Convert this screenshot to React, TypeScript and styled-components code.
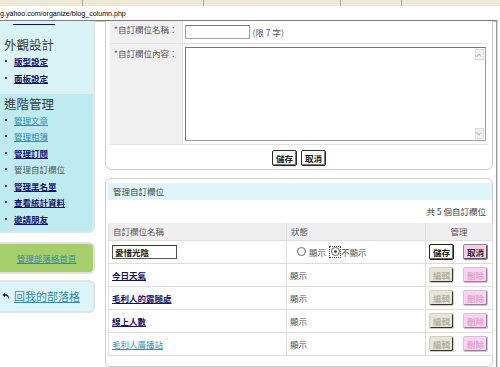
import React from "react";
import styled, { createGlobalStyle } from "styled-components";

const GlobalStyle = createGlobalStyle`
  html, body { margin: 0; padding: 0; background: #fff; }
  body {
    font-family: "Noto Sans CJK TC", "Noto Sans", sans-serif;
    font-size: 8.5px;
    color: #444;
    overflow: hidden;
  }
`;

const Window = styled.div`
  width: 500px;
  height: 367px;
  overflow: hidden;
  display: flex;
  flex-direction: column;
`;

const Chrome = styled.div`
  height: 6px;
  flex: none;
  background: #ece9d8;
  border-bottom: 1px solid #fff;
  display: flex;
`;

const ChromeCell = styled.div<{ $w: number }>`
  width: ${(p) => p.$w}px;
  flex: none;
  border-right: 1px solid #aca899;
`;

const AddressBar = styled.div`
  height: 11px;
  padding-top: 2px;
  flex: none;
  font-family: "Liberation Sans", Arial, sans-serif;
  font-size: 7.1px;
  line-height: 11px;
  color: #000;
  white-space: nowrap;
`;

const Viewport = styled.div`
  flex: 1;
  width: 496px;
  overflow: hidden;
  border-top: 1px solid #7f7f7f;
  border-right: 1px solid #9a9a9a;
  box-shadow: inset 0 1px 0 #c4c4c4, 1px 0 0 #d8d8d8;
`;

const Page = styled.div`
  display: flex;
  align-items: flex-start;
  margin-top: -10px;
`;

const Sidebar = styled.aside`
  width: 95px;
  flex: none;
  display: flex;
  flex-direction: column;
  padding-top: 2px;
`;

const NavBox = styled.div<{ $tone: "light" | "deep" }>`
  background: ${(p) => (p.$tone === "deep" ? "#bdebf0" : "#d9f4f7")};
  border-right: 2px solid #e4e4e4;
  padding: ${(p) => (p.$tone === "deep" ? "0 0 4px" : "0 0 7.5px")};
  ${(p) =>
    p.$tone === "deep" &&
    `border-bottom: 2px solid #e4e4e4; border-bottom-right-radius: 6px;`}
`;

const NavHeading = styled.div<{ $gap: number; $h: number }>`
  font-size: 12.5px;
  line-height: ${(p) => p.$h}px;
  height: ${(p) => p.$h}px;
  margin-top: ${(p) => p.$gap}px;
  padding-left: 4px;
  color: #3c3c3c;
  white-space: nowrap;
`;

const NavItem = styled.div`
  height: 16.5px;
  display: flex;
  align-items: center;
  padding-left: 5px;
  white-space: nowrap;
  color: #555;
`;

const ClippedLink = styled.div`
  height: 11px;
  width: 42px;
  margin-left: 13px;
  border-bottom: 1px solid #13136e;
  margin-bottom: 3.5px;
`;

const Bullet = styled.span`
  width: 2px;
  height: 2px;
  background: #4a4a4a;
  margin-right: 7px;
  flex: none;
`;

const Link = styled.a<{ $visited?: boolean }>`
  color: ${(p) => (p.$visited ? "#2f8db5" : "#13136e")};
  font-weight: ${(p) => (p.$visited ? 400 : 700)};
  text-decoration: underline;
  cursor: pointer;
`;

const ActionBox = styled.div<{ $green?: boolean }>`
  margin-top: ${(p) => (p.$green ? 9 : 6)}px;
  height: ${(p) => (p.$green ? 28 : 29)}px;
  background: ${(p) => (p.$green ? "#a7cf69" : "#dcf5f9")};
  border: 2px solid #e2e2e2;
  border-left: none;
  border-radius: 0 6px 6px 0;
  display: flex;
  align-items: center;
  justify-content: ${(p) => (p.$green ? "center" : "flex-start")};
  padding-left: ${(p) => (p.$green ? 0 : 2)}px;
  gap: 4px;
`;

const ActionLink = styled.a<{ $big?: boolean }>`
  color: #3589b0;
  font-size: ${(p) => (p.$big ? 11 : 8.5)}px;
  text-decoration: underline;
  white-space: nowrap;
`;

const Main = styled.main`
  width: 388px;
  margin-left: 10px;
  flex: none;
  display: flex;
  flex-direction: column;
  gap: 8px;
`;

const Panel = styled.section<{ $pad: string }>`
  border: 1px solid #cfcfcf;
  border-radius: 6px;
  background: #fff;
  padding: ${(p) => p.$pad};
`;

const FormTable = styled.table`
  width: 100%;
  border-collapse: collapse;
`;

const LabelCell = styled.td`
  width: 72px;
  background: #f0f0f0;
  color: #555;
  vertical-align: top;
  padding: 3px 0 0 4px;
  box-sizing: border-box;
  white-space: nowrap;
  border-bottom: 1px solid #e2e2e2;
  border-right: 1px solid #e2e2e2;
`;

const ValueCell = styled.td<{ $h: number }>`
  height: ${(p) => p.$h}px;
  padding: 0 0 0 2px;
  vertical-align: top;
  border-bottom: 1px solid #e2e2e2;
  color: #555;
  white-space: nowrap;
`;

const TextInput = styled.div<{ $dark?: boolean }>`
  display: inline-block;
  vertical-align: middle;
  width: 65px;
  height: 14px;
  box-sizing: border-box;
  border: 1px solid ${(p) => (p.$dark ? "#555" : "#a5a5a5")};
  border-top-color: ${(p) => (p.$dark ? "#333" : "#7a7a7a")};
  background: #fff;
  color: #222;
  font-weight: 700;
  line-height: 12px;
  padding-left: 2px;
`;

const InlineRow = styled.div`
  height: 22px;
  display: flex;
  align-items: center;
  gap: 3px;
  padding-top: 1px;
`;

const TextArea = styled.div`
  width: 301px;
  height: 94px;
  margin: 3px 0 3px;
  box-sizing: border-box;
  border: 1px solid #a0a0a0;
  border-top-color: #777;
  border-left-color: #777;
  display: flex;
  justify-content: flex-end;
`;

const ScrollTrack = styled.div`
  width: 9px;
  display: flex;
  flex-direction: column;
  justify-content: space-between;
  padding: 1px 1px 1px 0;
`;

const ScrollArrow = styled.div<{ $down?: boolean }>`
  height: 9px;
  background: #f3f3f3;
  border: 1px solid #dcdcdc;
  display: flex;
  align-items: center;
  justify-content: center;
  &::after {
    content: "";
    width: 3px;
    height: 3px;
    border-left: 1px solid #b8b8b8;
    border-top: 1px solid #b8b8b8;
    transform: ${(p) => (p.$down ? "rotate(225deg) translate(1px, 1px)" : "rotate(45deg) translate(1px, 1px)")};
  }
`;

const ButtonRow = styled.div`
  display: flex;
  justify-content: center;
  gap: 4px;
  margin-top: 5px;
`;

type Tone = "plain" | "cream" | "pink" | "off" | "offPink";

const tones: Record<Tone, { bg: string; fg: string; bd: string; sh: string }> = {
  plain: { bg: "#fff", fg: "#1a1a1a", bd: "#2a2a2a", sh: "#777" },
  cream: { bg: "#fffff4", fg: "#1a1a1a", bd: "#222", sh: "#666" },
  pink: { bg: "#f8d0ee", fg: "#2a2a2a", bd: "#8a8a8a", sh: "#555" },
  off: { bg: "#e6e6d6", fg: "#b3b3a4", bd: "#cfcfc2", sh: "#333" },
  offPink: { bg: "#f9d3f0", fg: "#e0a6cf", bd: "#e3bcd8", sh: "#888" },
};

const Button = styled.button<{ $tone: Tone }>`
  width: 25px;
  height: 16px;
  padding: 0;
  font-family: inherit;
  font-size: 8.5px;
  font-weight: 700;
  line-height: 14px;
  color: ${(p) => tones[p.$tone].fg};
  background: ${(p) => tones[p.$tone].bg};
  border: 1px solid ${(p) => tones[p.$tone].bd};
  border-radius: 2px;
  box-shadow: inset -1px -1px 0 ${(p) => tones[p.$tone].sh};
`;

const HeaderBar = styled.div`
  height: 17px;
  line-height: 17px;
  background: #def6fa;
  padding-left: 5px;
  color: #444;
`;

const CountRow = styled.div`
  height: 23px;
  line-height: 23px;
  text-align: right;
  padding-right: 6px;
  color: #444;
`;

const ListTable = styled.table`
  width: 100%;
  border-collapse: collapse;
  table-layout: fixed;
`;

const Th = styled.th<{ $w: number; $center?: boolean }>`
  box-sizing: border-box;
  width: ${(p) => p.$w}px;
  height: 17px;
  padding: 0 0 0 ${(p) => (p.$center ? 0 : 4)}px;
  background: #efefef;
  font-weight: 400;
  color: #555;
  text-align: ${(p) => (p.$center ? "center" : "left")};
  border: 1px solid #dedede;
  border-top: none;
`;

const Td = styled.td`
  height: 22px;
  padding: 0 0 0 3px;
  border: 1px solid #dedede;
  color: #555;
  white-space: nowrap;
  vertical-align: middle;
`;

const ActionCell = styled.div`
  display: flex;
  gap: 9px;
`;

const Radio = styled.span<{ $on?: boolean }>`
  width: 9px;
  height: 9px;
  box-sizing: border-box;
  border-radius: 50%;
  border: 1px solid #6a6a6a;
  background: #fff;
  display: inline-flex;
  align-items: center;
  justify-content: center;
  &::after {
    content: "";
    width: 3px;
    height: 3px;
    border-radius: 50%;
    background: ${(p) => (p.$on ? "#2f6b2f" : "transparent")};
  }
`;

const FocusBox = styled.span`
  display: inline-flex;
  align-items: center;
  justify-content: center;
  width: 12px;
  height: 12px;
  box-sizing: border-box;
  border: 1px dotted #444;
`;

const RadioGroup = styled.div`
  display: flex;
  align-items: center;
  gap: 3px;
  padding-left: 7px;
`;

const TightLabel = styled.span`
  margin-left: -3px;
`;

const ReturnIcon = () => (
  <svg width="8" height="8" viewBox="0 0 8 8">
    <path d="M3 0.5 L0.5 3 L3 5.5 V3.8 C5 3.8 6.2 4.6 6.5 7.5 C7.6 4.2 6 2.2 3 2.2 Z" fill="#222" />
  </svg>
);

const advanced: { label: string; kind: "visited" | "link" | "text" }[] = [
  { label: "管理文章", kind: "visited" },
  { label: "管理相簿", kind: "visited" },
  { label: "管理訂閱", kind: "link" },
  { label: "管理自訂欄位", kind: "text" },
  { label: "管理黑名單", kind: "link" },
  { label: "查看統計資料", kind: "link" },
  { label: "邀請朋友", kind: "link" },
];

const columns = [
  { name: "今日天氣", visited: false },
  { name: "毛利人的露腿處", visited: false },
  { name: "線上人數", visited: false },
  { name: "毛利人廣播站", visited: true },
];

export default function App() {
  return (
    <>
      <GlobalStyle />
      <Window>
        <Chrome>
          <ChromeCell $w={82} />
          <ChromeCell $w={120} />
          <ChromeCell $w={136} />
          <ChromeCell $w={60} />
        </Chrome>
        <AddressBar>g.yahoo.com/organize/blog_column.php</AddressBar>
        <Viewport>
          <Page>
            <Sidebar>
              <NavBox $tone="light">
                <ClippedLink />
                <NavHeading $gap={12} $h={16}>
                  外觀設計
                </NavHeading>
                <NavItem>
                  <Bullet />
                  <Link>版型設定</Link>
                </NavItem>
                <NavItem>
                  <Bullet />
                  <Link>面板設定</Link>
                </NavItem>
              </NavBox>
              <NavBox $tone="deep">
                <NavHeading $gap={3.75} $h={14}>
                  進階管理
                </NavHeading>
                {advanced.map((a) => (
                  <NavItem key={a.label}>
                    <Bullet />
                    {a.kind === "text" ? a.label : <Link $visited={a.kind === "visited"}>{a.label}</Link>}
                  </NavItem>
                ))}
              </NavBox>
              <ActionBox $green>
                <ActionLink>管理部落格首頁</ActionLink>
              </ActionBox>
              <ActionBox>
                <ReturnIcon />
                <ActionLink $big>回我的部落格</ActionLink>
              </ActionBox>
            </Sidebar>

            <Main>
              <Panel $pad="8px 4px 3px">
                <FormTable>
                  <tbody>
                    <tr>
                      <LabelCell>*自訂欄位名稱：</LabelCell>
                      <ValueCell $h={23}>
                        <InlineRow>
                          <TextInput />
                          <span>(限 7 字)</span>
                        </InlineRow>
                      </ValueCell>
                    </tr>
                    <tr>
                      <LabelCell>*自訂欄位內容：</LabelCell>
                      <ValueCell $h={100}>
                        <TextArea>
                          <ScrollTrack>
                            <ScrollArrow />
                            <ScrollArrow $down />
                          </ScrollTrack>
                        </TextArea>
                      </ValueCell>
                    </tr>
                  </tbody>
                </FormTable>
                <ButtonRow>
                  <Button $tone="plain">儲存</Button>
                  <Button $tone="plain">取消</Button>
                </ButtonRow>
              </Panel>

              <Panel $pad="4px 0 10px 2px">
                <HeaderBar>管理自訂欄位</HeaderBar>
                <CountRow>共 5 個自訂欄位</CountRow>
                <ListTable>
                  <thead>
                    <tr>
                      <Th $w={178}>自訂欄位名稱</Th>
                      <Th $w={139}>狀態</Th>
                      <Th $w={67} $center>
                        管理
                      </Th>
                    </tr>
                  </thead>
                  <tbody>
                    <tr>
                      <Td>
                        <TextInput $dark>愛惜光陰</TextInput>
                      </Td>
                      <Td>
                        <RadioGroup>
                          <Radio />
                          <span>顯示</span>
                          <FocusBox>
                            <Radio $on />
                          </FocusBox>
                          <TightLabel>不顯示</TightLabel>
                        </RadioGroup>
                      </Td>
                      <Td>
                        <ActionCell>
                          <Button $tone="cream">儲存</Button>
                          <Button $tone="pink">取消</Button>
                        </ActionCell>
                      </Td>
                    </tr>
                    {columns.map((c) => (
                      <tr key={c.name}>
                        <Td>
                          <Link $visited={c.visited}>{c.name}</Link>
                        </Td>
                        <Td>顯示</Td>
                        <Td>
                          <ActionCell>
                            <Button $tone="off">編輯</Button>
                            <Button $tone="offPink">刪除</Button>
                          </ActionCell>
                        </Td>
                      </tr>
                    ))}
                  </tbody>
                </ListTable>
              </Panel>
            </Main>
          </Page>
        </Viewport>
      </Window>
    </>
  );
}
